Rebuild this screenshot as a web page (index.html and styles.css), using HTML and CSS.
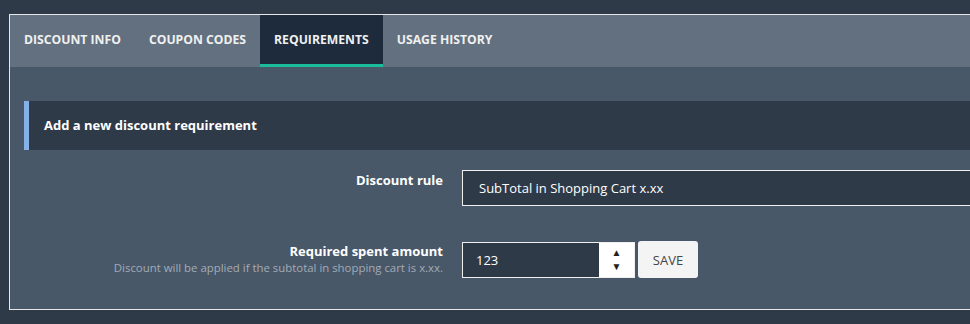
FILE: index.html
```html
<!DOCTYPE html>
<html lang="en">
<head>
  <meta charset="UTF-8">
  <meta name="viewport" content="width=device-width, initial-scale=1">
  <title>Discount requirements</title>
  <link rel="stylesheet" href="styles.css">
</head>
<body>
  <div class="panel">
    <!-- Abas -->
    <div class="tabs">
      <div class="tab">Discount info</div>
      <div class="tab">Coupon codes</div>
      <div class="tab active">Requirements</div>
      <div class="tab">Usage history</div>
    </div>

    <div class="tab-content">
      <div class="section-title">Add a new discount requirement</div>

      <div class="form-row">
        <div class="form-label">
          <label for="rule">Discount rule</label>
        </div>
        <div class="form-field">
          <div class="select-box" id="rule">SubTotal in Shopping Cart x.xx</div>
        </div>
      </div>

      <div class="form-row">
        <div class="form-label">
          <label for="amount">Required spent amount</label>
          <div class="hint">Discount will be applied if the subtotal in shopping cart is x.xx.</div>
        </div>
        <div class="form-field inline">
          <div class="number-box">
            <input type="text" id="amount" value="123">
            <div class="spinner">
              <span>&#9650;</span>
              <span>&#9660;</span>
            </div>
          </div>
          <button class="save-btn">Save</button>
        </div>
      </div>
    </div>
  </div>
</body>
</html>
```
FILE: styles.css
```css
html {
  overflow: hidden;
}
body {
  margin: 0;
  padding: 14px 0 0 9px;
  background-color: #2e3a48;
  font-family: 'Open Sans', 'Noto Sans', sans-serif;
  font-size: 13px;
  color: #f2f2f2;
}
.panel {
  width: 1000px;
  border: 1px solid #e8e8e8;
}
.tabs {
  display: flex;
  background-color: #637080;
  height: 52px;
}
.tab {
  padding: 0 14px;
  line-height: 49px;
  border-bottom: 3px solid transparent;
  text-transform: uppercase;
  font-weight: 700;
  font-size: 12.2px;
  color: #f0f0f0;
}
.tab.active {
  background-color: #1e2b3d;
  border-bottom-color: #1abc9c;
}
.tab-content {
  background-color: #485869;
  padding: 34px 0 31px 14px;
}
.section-title {
  background-color: #2f3a48;
  border-left: 5px solid #85b1e6;
  height: 49px;
  line-height: 49px;
  padding-left: 15px;
  font-weight: 700;
  color: #fff;
}
.form-row {
  display: grid;
  grid-template-columns: 419px 1fr;
  column-gap: 19px;
  margin-top: 20px;
}
.form-row + .form-row {
  margin-top: 35px;
}
.form-label {
  text-align: right;
  padding-top: 1px;
}
.form-label label {
  display: block;
  font-weight: 700;
  line-height: 18px;
  color: #fff;
}
.hint {
  font-size: 11.4px;
  line-height: 16px;
  color: #a3abb5;
}
.select-box {
  height: 34px;
  line-height: 34px;
  border: 1px solid #f0f0f0;
  background-color: #2f3a48;
  padding-left: 16px;
  color: #fff;
}
.form-field.inline {
  display: flex;
  align-items: center;
  gap: 3px;
}
.number-box {
  display: flex;
  width: 171px;
  height: 34px;
  border: 1px solid #f0f0f0;
  background-color: #2f3a48;
}
.number-box input {
  flex: 1;
  min-width: 0;
  border: none;
  background: none;
  padding: 0 0 0 13px;
  font: inherit;
  color: #fff;
  outline: none;
}
.spinner {
  width: 35px;
  background-color: #fff;
  display: flex;
  flex-direction: column;
  align-items: center;
  justify-content: center;
  gap: 3px;
  font-size: 10px;
  line-height: 11px;
  color: #222;
}
.save-btn {
  height: 37px;
  width: 60px;
  border: none;
  border-radius: 3px;
  background-color: #f4f4f4;
  color: #444;
  font: inherit;
  text-transform: uppercase;
  cursor: pointer;
}
```
